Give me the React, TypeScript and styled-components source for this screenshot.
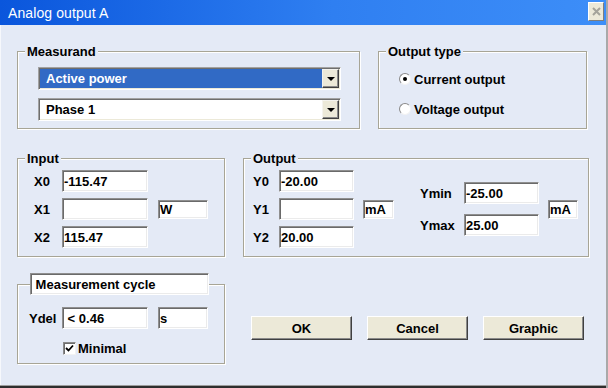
import React from 'react';
import styled, { createGlobalStyle } from 'styled-components';

const GlobalStyle = createGlobalStyle`
  html, body {
    margin: 0;
    padding: 0;
    background: #e4eaf6;
  }
  body {
    font-family: "Liberation Sans", Arial, sans-serif;
  }
`;

const Window = styled.div`
  width: 608px;
  height: 388px;
  box-sizing: border-box;
  display: flex;
  flex-direction: column;
  border-right: 2px solid #a9a9a9;
  background: #e4eaf6;
  overflow: hidden;
`;

const TitleBar = styled.div`
  height: 25px;
  flex: none;
  display: flex;
  align-items: center;
  justify-content: space-between;
  padding: 0 2px 0 8px;
  background: linear-gradient(to right, #0a56dc, #2f7ff1 55%, #3d8ef8);
`;

const Title = styled.span`
  color: #fff;
  font-size: 14px;
  letter-spacing: 0.1px;
`;

const CloseButton = styled.div`
  width: 16px;
  height: 19px;
  box-sizing: border-box;
  align-self: flex-start;
  margin-top: 2px;
  display: flex;
  align-items: center;
  justify-content: center;
  background: #ece9d8;
  border: 1px solid;
  border-color: #fff #7d7d7d #7d7d7d #fff;
`;

const Body = styled.div`
  flex: 1;
  display: flex;
  flex-direction: column;
  padding: 19px 0 0 17px;
  box-shadow: inset 1px 0 0 #f6f8fc;
`;

const BottomEdge = styled.div`
  height: 3px;
  flex: none;
  border-top: 1px solid #9c9c9c;
  background: #2e2e2e;
  box-sizing: border-box;
`;

const Row = styled.div<{ $gap: number; $mt?: number }>`
  display: flex;
  align-items: flex-start;
  gap: ${({ $gap }) => $gap}px;
  margin-top: ${({ $mt = 0 }) => $mt}px;
`;

const GroupBox = styled.fieldset<{ $w: number; $h: number }>`
  margin: 0;
  padding: 0;
  min-width: 0;
  width: ${({ $w }) => $w}px;
  height: ${({ $h }) => $h}px;
  box-sizing: border-box;
  border: 1px solid #a7a596;
  box-shadow: inset 1px 1px 0 #fff, 1px 1px 0 #fff;
`;

const Legend = styled.legend<{ $ml?: number }>`
  margin-left: ${({ $ml = 7 }) => $ml}px;
  padding: 0 2px;
  font-size: 13px;
  font-weight: bold;
  line-height: 15px;
  background: #e4eaf6;
`;

const FieldLegend = styled.legend`
  margin-left: 12px;
  padding: 0;
  background: #e4eaf6;
`;

const GroupContent = styled.div<{ $pt: number; $pl: number }>`
  padding: ${({ $pt, $pl }) => `${$pt}px 0 0 ${$pl}px`};
`;

const Stack = styled.div<{ $gap: number }>`
  display: flex;
  flex-direction: column;
  gap: ${({ $gap }) => $gap}px;
`;

/* combo box */
const Combo = styled.div`
  width: 303px;
  height: 23px;
  box-sizing: border-box;
  display: flex;
  border: 1px solid;
  border-color: #a2a2a2 #fff #fff #a2a2a2;
  box-shadow: inset 1px 1px 0 #6e6e6e, inset -1px -1px 0 #ece9d8;
  padding: 1px;
`;

const ComboValue = styled.div<{ $selected?: boolean }>`
  flex: 1;
  display: flex;
  align-items: center;
  padding-left: 6px;
  font-size: 13px;
  font-weight: bold;
  background: ${({ $selected }) => ($selected ? '#316ac5' : '#fff')};
  color: ${({ $selected }) => ($selected ? '#fff' : '#000')};
`;

const ComboArrow = styled.div`
  width: 17px;
  box-sizing: border-box;
  display: flex;
  align-items: center;
  justify-content: center;
  background: #ece9d8;
  border: 1px solid;
  border-color: #f4f3ee #404040 #404040 #f4f3ee;
  box-shadow: inset -1px -1px 0 #8a8a8a;

  &::after {
    content: '';
    border-left: 4px solid transparent;
    border-right: 4px solid transparent;
    border-top: 4px solid #000;
  }
`;

/* radio */
const OptionRow = styled.label`
  display: flex;
  align-items: center;
  height: 16px;
  font-size: 13px;
  font-weight: bold;
`;

const RadioDot = styled.span<{ $checked?: boolean }>`
  width: 12px;
  height: 12px;
  box-sizing: border-box;
  border-radius: 50%;
  border: 1px solid;
  border-color: #8a8a8a #f2f2f2 #f2f2f2 #8a8a8a;
  background: #fff;
  margin-right: 3px;
  display: flex;
  align-items: center;
  justify-content: center;

  &::after {
    content: '';
    width: 4px;
    height: 4px;
    border-radius: 50%;
    background: ${({ $checked }) => ($checked ? '#000' : 'transparent')};
  }
`;

/* text fields */
const Field = styled.div<{ $w: number; $h?: number }>`
  width: ${({ $w }) => $w}px;
  height: ${({ $h = 22 }) => $h}px;
  box-sizing: border-box;
  display: flex;
  align-items: center;
  padding-left: 1px;
  font-size: 13px;
  font-weight: bold;
  background: #fff;
  border: 1px solid;
  border-color: #8f8f8f #fff #fff #8f8f8f;
  box-shadow: inset 1px 1px 0 #6a6a6a, inset -1px -1px 0 #ebebeb;
  white-space: nowrap;
`;

const FieldGrid = styled.div<{ $cols: string; $colGap: number; $rowGap: number }>`
  display: grid;
  grid-template-columns: ${({ $cols }) => $cols};
  column-gap: ${({ $colGap }) => $colGap}px;
  row-gap: ${({ $rowGap }) => $rowGap}px;
  align-items: center;
`;

const Label = styled.span`
  font-size: 13px;
  font-weight: bold;
  white-space: nowrap;
`;

const Cell = styled.div<{ $row: number; $col: number }>`
  grid-row: ${({ $row }) => $row};
  grid-column: ${({ $col }) => $col};
`;

const Split = styled.div<{ $gap: number }>`
  display: flex;
  align-items: center;
  gap: ${({ $gap }) => $gap}px;
`;

const InlineRow = styled.div`
  display: flex;
  align-items: center;
`;

const CycleLabel = styled(Label)`
  width: 33px;
`;

const CheckRow = styled.label`
  display: flex;
  align-items: center;
  margin: 12px 0 0 34px;
  font-size: 13px;
  font-weight: bold;
`;

const CheckBox = styled.span`
  width: 13px;
  height: 13px;
  box-sizing: border-box;
  margin-right: 2px;
  display: flex;
  align-items: center;
  justify-content: center;
  background: #fff;
  border: 1px solid;
  border-color: #8a8a8a #f2f2f2 #f2f2f2 #8a8a8a;
  box-shadow: inset 1px 1px 0 #6c6c6c;
`;

const ButtonBar = styled.div`
  display: flex;
  gap: 15px;
  padding-top: 43px;
`;

const Button = styled.button`
  width: 101px;
  height: 24px;
  margin: 0;
  padding: 0;
  box-sizing: border-box;
  background: #ece9d8;
  border: 1px solid;
  border-color: #fff #404040 #404040 #fff;
  box-shadow: inset -1px -1px 0 #8a8a8a;
  font-family: "Liberation Sans", Arial, sans-serif;
  font-size: 13px;
  font-weight: bold;
  color: #000;
`;

const Combobox = ({ value, selected }: { value: string; selected?: boolean }) => (
  <Combo>
    <ComboValue $selected={selected}>{value}</ComboValue>
    <ComboArrow />
  </Combo>
);

export default function App() {
  return (
    <>
      <GlobalStyle />
      <Window>
        <TitleBar>
          <Title>Analog output A</Title>
          <CloseButton>
            <svg width="9" height="9" viewBox="0 0 9 9">
              <path d="M1 1L8 8M8 1L1 8" stroke="#a4a39a" strokeWidth="2" />
            </svg>
          </CloseButton>
        </TitleBar>

        <Body>
          <Row $gap={18}>
            <GroupBox $w={343} $h={85}>
              <Legend>Measurand</Legend>
              <GroupContent $pt={8} $pl={20}>
                <Stack $gap={8}>
                  <Combobox value="Active power" selected />
                  <Combobox value="Phase 1" />
                </Stack>
              </GroupContent>
            </GroupBox>

            <GroupBox $w={209} $h={85}>
              <Legend>Output type</Legend>
              <GroupContent $pt={12} $pl={20}>
                <Stack $gap={14}>
                  <OptionRow>
                    <RadioDot $checked />
                    Current output
                  </OptionRow>
                  <OptionRow>
                    <RadioDot />
                    Voltage output
                  </OptionRow>
                </Stack>
              </GroupContent>
            </GroupBox>
          </Row>

          <Row $gap={18} $mt={22}>
            <GroupBox $w={208} $h={106}>
              <Legend>Input</Legend>
              <GroupContent $pt={4} $pl={16}>
                <FieldGrid $cols="18px 86px 50px" $colGap={10} $rowGap={6}>
                  <Cell $row={1} $col={1}><Label>X0</Label></Cell>
                  <Cell $row={1} $col={2}><Field $w={86}>-115.47</Field></Cell>
                  <Cell $row={2} $col={1}><Label>X1</Label></Cell>
                  <Cell $row={2} $col={2}><Field $w={86} /></Cell>
                  <Cell $row={2} $col={3}><Field $w={50} $h={19}>W</Field></Cell>
                  <Cell $row={3} $col={1}><Label>X2</Label></Cell>
                  <Cell $row={3} $col={2}><Field $w={86}>115.47</Field></Cell>
                </FieldGrid>
              </GroupContent>
            </GroupBox>

            <GroupBox $w={346} $h={106}>
              <Legend>Output</Legend>
              <GroupContent $pt={4} $pl={9}>
                <Split $gap={26}>
                  <FieldGrid $cols="17px 75px 31px" $colGap={9} $rowGap={6}>
                    <Cell $row={1} $col={1}><Label>Y0</Label></Cell>
                    <Cell $row={1} $col={2}><Field $w={75}>-20.00</Field></Cell>
                    <Cell $row={2} $col={1}><Label>Y1</Label></Cell>
                    <Cell $row={2} $col={2}><Field $w={75} /></Cell>
                    <Cell $row={2} $col={3}><Field $w={31} $h={19}>mA</Field></Cell>
                    <Cell $row={3} $col={1}><Label>Y2</Label></Cell>
                    <Cell $row={3} $col={2}><Field $w={75}>20.00</Field></Cell>
                  </FieldGrid>
                  <Split $gap={9}>
                    <FieldGrid $cols="36px 75px" $colGap={8} $rowGap={10}>
                      <Label>Ymin</Label>
                      <Field $w={75}>-25.00</Field>
                      <Label>Ymax</Label>
                      <Field $w={75}>25.00</Field>
                    </FieldGrid>
                    <Field $w={30} $h={19}>mA</Field>
                  </Split>
                </Split>
              </GroupContent>
            </GroupBox>
          </Row>

          <Row $gap={26} $mt={16}>
            <GroupBox $w={208} $h={91}>
              <FieldLegend>
                <Field $w={179} $h={22}>&nbsp;Measurement cycle</Field>
              </FieldLegend>
              <GroupContent $pt={12} $pl={11}>
                <InlineRow>
                  <CycleLabel>Ydel</CycleLabel>
                  <Field $w={86}>&nbsp;&lt; 0.46</Field>
                  <Field $w={50} style={{ marginLeft: 10 }}>s</Field>
                </InlineRow>
                <CheckRow>
                  <CheckBox>
                    <svg width="9" height="9" viewBox="0 0 9 9">
                      <path d="M1 4L3.5 6.5L8 1.5" stroke="#000" strokeWidth="1.8" fill="none" />
                    </svg>
                  </CheckBox>
                  Minimal
                </CheckRow>
              </GroupContent>
            </GroupBox>

            <ButtonBar>
              <Button>OK</Button>
              <Button>Cancel</Button>
              <Button>Graphic</Button>
            </ButtonBar>
          </Row>
        </Body>
        <BottomEdge />
      </Window>
    </>
  );
}
